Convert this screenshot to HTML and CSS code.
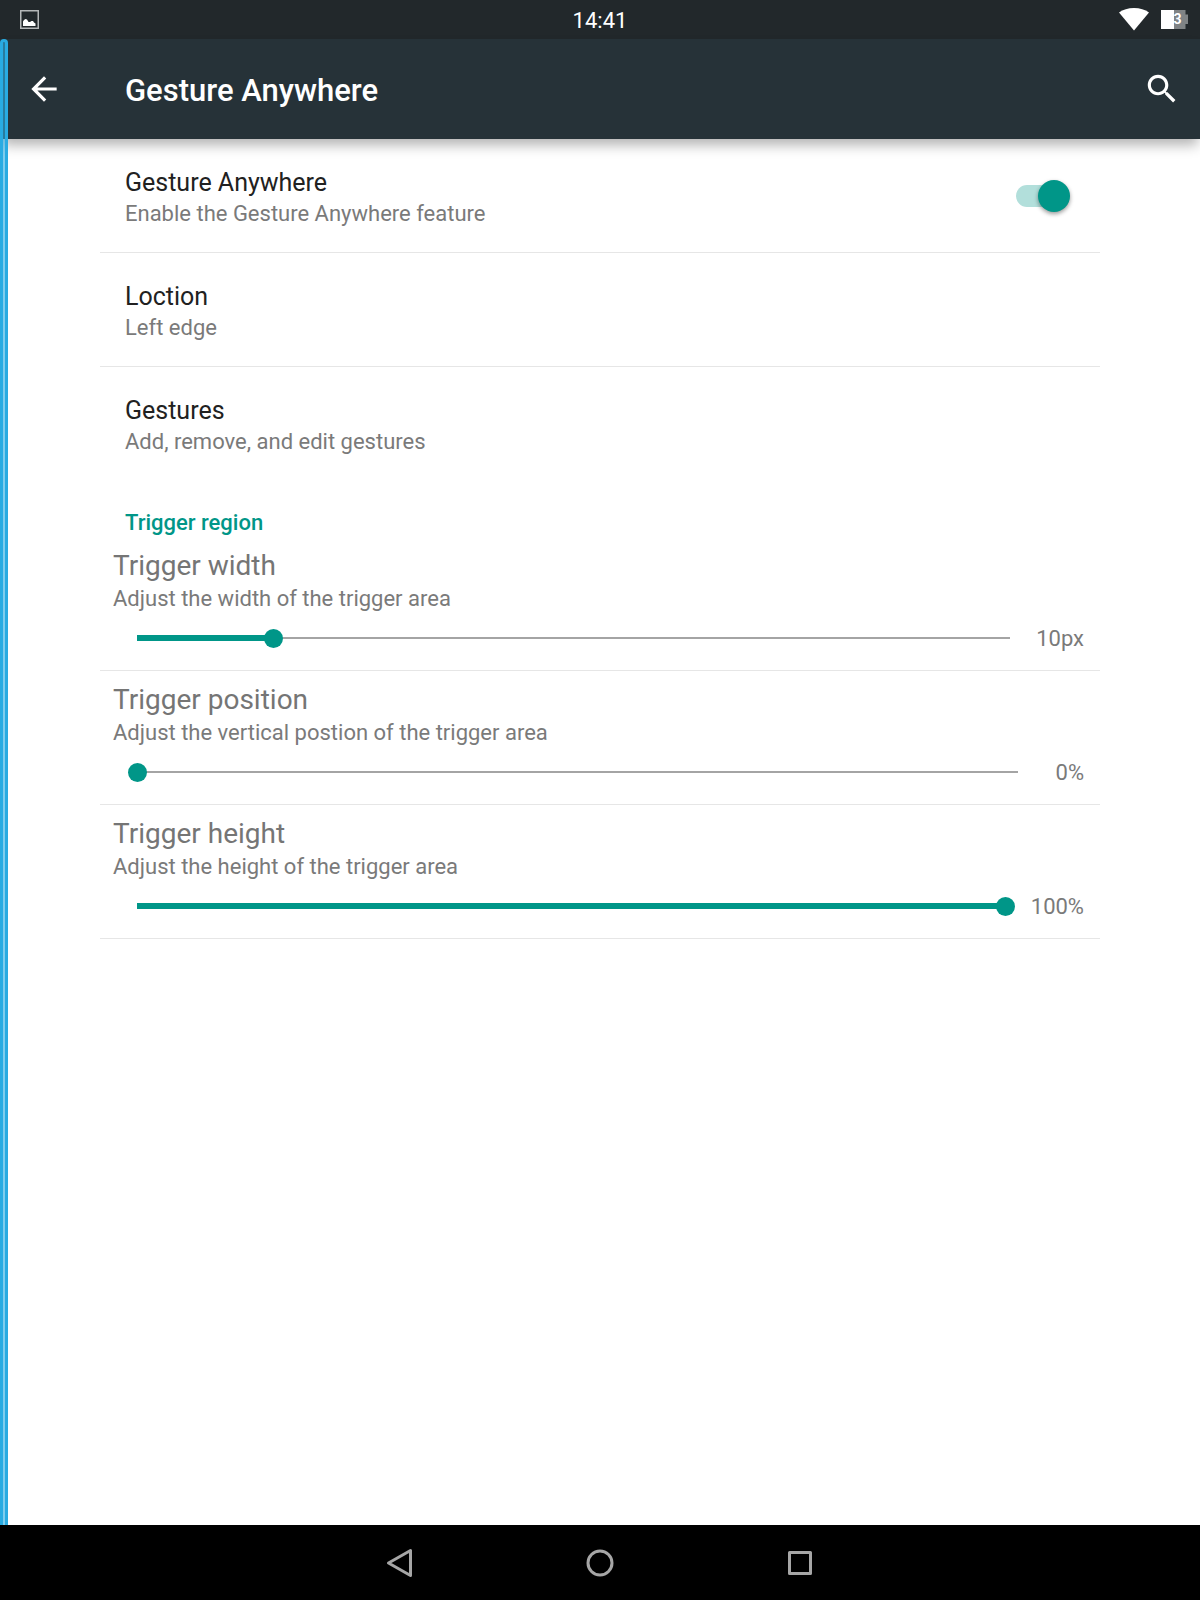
FILE: index.html
```html
<!DOCTYPE html>
<html lang="en">
<head>
    <meta charset="UTF-8">
    <meta name="viewport" content="width=device-width, initial-scale=1.0">
    <title>Gesture Anywhere</title>
    <link rel="stylesheet" href="styles.css">
</head>
<body>
    <div class="status-bar">
        <svg class="status-picture" width="19" height="19" viewBox="0 0 19 19">
            <rect x="0.75" y="0.75" width="17.5" height="17.5" fill="none" stroke="#b4b7b8" stroke-width="1.5"/>
            <path d="M3 16v-4.5l1-1.5 1.5-1 1.5 0.5 1.5 2.5 1.5 0 1.5-1 1.5 0 1 1.5 1.5 1V16z" fill="#fff"/>
        </svg>
        <time class="clock">14:41</time>
        <div class="status-icons">
            <svg width="30" height="23" viewBox="0 0 30 23">
                <path d="M15 22.5 0 4.5C4 1.500 9 0 15 0s11 1.500 15 4.500z" fill="#fff"/>
            </svg>
            <svg width="27" height="19" viewBox="0 0 27 19">
                <path d="M0 0h24.500v4.500H27v9.500h-2.500v5H0z" fill="#7f8385"/>
                <path d="M0 0h13v19H0z" fill="#fff"/>
                <text x="16.500" y="14" text-anchor="middle" class="battery-level">3</text>
            </svg>
        </div>
    </div>

    <header class="toolbar">
        <button class="icon-button" aria-label="Back">
            <svg width="38" height="38" viewBox="0 0 24 24">
                <path d="M20 11H7.830l5.590-5.590L12 4l-8 8 8 8 1.410-1.410L7.830 13H20v-2z" fill="#fff"/>
            </svg>
        </button>
        <h1>Gesture Anywhere</h1>
        <button class="icon-button" aria-label="Search">
            <svg width="38" height="38" viewBox="0 0 24 24">
                <path d="M15.500 14h-.79l-.28-.27C15.410 12.590 16 11.110 16 9.500 16 5.910 13.090 3 9.500 3S3 5.910 3 9.500 5.910 16 9.500 16c1.610 0 3.090-.59 4.230-1.570l.27.28v.79l5 4.990L20.490 19l-4.990-5zm-6 0C7.010 14 5 11.990 5 9.500S7.010 5 9.500 5 14 7.010 14 9.500 11.990 14 9.500 14z" fill="#fff"/>
            </svg>
        </button>
    </header>

    <main class="settings">
        <div class="row">
            <label class="row-text" for="enableGestures">
                <span class="row-title">Gesture Anywhere</span>
                <span class="summary">Enable the Gesture Anywhere feature</span>
            </label>
            <input class="switch" type="checkbox" role="switch" id="enableGestures" checked>
        </div>
        <a class="row" href="#location">
            <span class="row-text">
                <span class="row-title">Loction</span>
                <span class="summary">Left edge</span>
            </span>
        </a>
        <a class="row row-last" href="#gestures">
            <span class="row-text">
                <span class="row-title">Gestures</span>
                <span class="summary">Add, remove, and edit gestures</span>
            </span>
        </a>

        <h2>Trigger region</h2>
        <div class="slider-row">
            <label class="slider-title" for="triggerWidth">Trigger width</label>
            <span class="summary">Adjust the width of the trigger area</span>
            <div class="slider-line">
                <input class="slider" type="range" id="triggerWidth" min="0" max="64" value="10" data-unit="px" style="--value: 0.15625">
                <output for="triggerWidth">10px</output>
            </div>
        </div>
        <div class="slider-row">
            <label class="slider-title" for="triggerPosition">Trigger position</label>
            <span class="summary">Adjust the vertical postion of the trigger area</span>
            <div class="slider-line">
                <input class="slider" type="range" id="triggerPosition" min="0" max="100" value="0" data-unit="%" style="--value: 0">
                <output for="triggerPosition">0%</output>
            </div>
        </div>
        <div class="slider-row">
            <label class="slider-title" for="triggerHeight">Trigger height</label>
            <span class="summary">Adjust the height of the trigger area</span>
            <div class="slider-line">
                <input class="slider" type="range" id="triggerHeight" min="0" max="100" value="100" data-unit="%" style="--value: 1">
                <output for="triggerHeight">100%</output>
            </div>
        </div>
    </main>

    <nav class="nav-bar">
        <button class="nav-button" aria-label="Back">
            <svg width="30" height="30" viewBox="0 0 30 30">
                <path d="M25.500 2.500v25L3.500 15z"/>
            </svg>
        </button>
        <button class="nav-button" aria-label="Home">
            <svg width="30" height="30" viewBox="0 0 30 30">
                <circle cx="15" cy="15" r="12"/>
            </svg>
        </button>
        <button class="nav-button" aria-label="Recent apps">
            <svg width="30" height="30" viewBox="0 0 30 30">
                <rect x="4.500" y="4.500" width="21" height="21"/>
            </svg>
        </button>
    </nav>

    <div class="trigger-area"></div>

    <script>
        document.querySelectorAll('.slider').forEach(function(slider) {
            slider.addEventListener('input', function() {
                slider.style.setProperty('--value', slider.value / slider.max);
                slider.nextElementSibling.value = slider.value + slider.dataset.unit;
            });
        });
    </script>
</body>
</html>
```
FILE: styles.css
```css
* {
    box-sizing: border-box;
}
body {
    margin: 0;
    min-height: 100vh;
    display: flex;
    flex-direction: column;
    background-color: #ffffff;
    font-family: Roboto, Arial, sans-serif;
    font-size: 22px;
    line-height: 30px;
    color: #212121;
}
svg {
    display: block;
}
button {
    padding: 0;
    border: none;
    background: none;
    cursor: pointer;
}

/* status bar */
.status-bar {
    display: grid;
    grid-template-columns: 1fr auto 1fr;
    align-items: center;
    height: 39px;
    padding: 0 12px;
    background-color: #22282b;
}
.status-picture {
    margin-left: 8px;
}
.clock {
    padding-top: 2px;
    color: #ffffff;
}
.status-icons {
    display: flex;
    justify-content: flex-end;
    align-items: center;
    gap: 12px;
}
.battery-level {
    font-size: 14px;
    font-weight: bold;
    fill: #ffffff;
}

/* toolbar */
.toolbar {
    display: flex;
    align-items: center;
    height: 100px;
    padding: 0 19px 0 25px;
    background-color: #263238;
    box-shadow: 0 8px 12px -2px rgba(0, 0, 0, 0.3);
}
.toolbar h1 {
    flex: 1;
    margin: 0;
    padding: 4px 0 0 62px;
    font-size: 31px;
    font-weight: 500;
    line-height: 40px;
    color: #ffffff;
}

/* settings list */
.settings {
    flex: 1;
    width: 84%;
    max-width: 1000px;
    margin: 0 auto;
}
.row {
    display: flex;
    align-items: center;
    justify-content: space-between;
    height: 114px;
    padding: 0 30px 0 25px;
    border-bottom: 1px solid #e6e6e6;
    color: inherit;
    text-decoration: none;
}
.row-last {
    border-bottom-color: transparent;
}
.row-text {
    padding-top: 4px;
}
.row-title {
    display: block;
    font-size: 25px;
    line-height: 32px;
}
.summary {
    display: block;
    color: #7a7a7a;
}
h2 {
    margin: 0;
    padding: 28px 25px 0;
    font-size: 22px;
    font-weight: 500;
    line-height: 28px;
    color: #009688;
}

/* switch */
.switch {
    appearance: none;
    position: relative;
    width: 54px;
    height: 32px;
    margin: 0;
    cursor: pointer;
}
.switch::before {
    content: "";
    position: absolute;
    top: 5px;
    left: 0;
    width: 50px;
    height: 22px;
    border-radius: 11px;
    background-color: #bdbdbd;
}
.switch::after {
    content: "";
    position: absolute;
    top: 0;
    left: 0;
    width: 32px;
    height: 32px;
    border-radius: 50%;
    background-color: #f1f1f1;
    box-shadow: 0 2px 4px rgba(0, 0, 0, 0.4);
}
.switch:checked::before {
    background-color: #b2dfdb;
}
.switch:checked::after {
    left: auto;
    right: 0;
    background-color: #009688;
}

/* sliders */
.slider-row {
    height: 134px;
    padding: 11px 16px 0 13px;
    border-bottom: 1px solid #e6e6e6;
}
.slider-title {
    display: block;
    font-size: 28px;
    line-height: 36px;
    color: #757575;
}
.slider-line {
    display: flex;
    align-items: center;
    height: 48px;
}
.slider {
    appearance: none;
    flex: 1;
    min-width: 0;
    height: 20px;
    margin: 0 16px 0 15px;
    cursor: pointer;
    background-color: transparent;
    background-image: linear-gradient(#009688, #009688), linear-gradient(#a4a4a4, #a4a4a4);
    background-repeat: no-repeat;
    background-position: 9px center, 9px center;
    background-size: calc((100% - 19px) * var(--value)) 6px, calc(100% - 19px) 2px;
}
.slider::-webkit-slider-thumb {
    appearance: none;
    width: 19px;
    height: 19px;
    border-radius: 50%;
    background-color: #009688;
}
.slider-line output {
    min-width: 40px;
    padding-top: 2px;
    text-align: right;
    color: #7a7a7a;
}

/* navigation bar */
.nav-bar {
    display: flex;
    justify-content: center;
    height: 75px;
    background-color: #000000;
}
.nav-button {
    display: flex;
    align-items: center;
    justify-content: center;
    width: 200px;
}
.nav-button svg {
    fill: none;
    stroke: #a6a6a6;
    stroke-width: 3;
    stroke-linejoin: round;
}

/* highlighted edge where gestures start */
.trigger-area {
    position: absolute;
    top: 39px;
    bottom: 75px;
    left: 0;
    width: 8px;
    border: 3px solid #29abe2;
    border-bottom: none;
    border-radius: 4px 4px 0 0;
    background-color: rgba(41, 171, 226, 0.6);
}
```
